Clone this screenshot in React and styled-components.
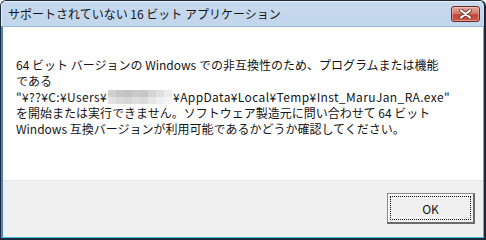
import React from "react";
import styled, { createGlobalStyle } from "styled-components";

const GlobalStyle = createGlobalStyle`
  html, body {
    margin: 0;
    padding: 0;
    background: #ffffff;
  }
  body {
    width: 486px;
    height: 240px;
    overflow: hidden;
    font-family: "Noto Sans CJK JP", "Noto Sans", sans-serif;
  }
`;

const Window = styled.div`
  width: 486px;
  height: 240px;
  box-sizing: border-box;
  display: flex;
  flex-direction: column;
  border-style: solid;
  border-color: #1d2838;
  border-width: 1px 2px 2px 1px;
  border-radius: 6px 6px 0 0;
  background: linear-gradient(#c6d9ee, #b6cde7 40%, #b3cae5);
  overflow: hidden;
`;

const TitleBar = styled.div`
  height: 25px;
  flex: none;
  display: flex;
  align-items: center;
  justify-content: space-between;
  padding: 0 4px 0 7px;
  box-shadow: inset 1px 1px 0 rgba(255, 255, 255, 0.6);
`;

const Title = styled.span`
  font-size: 12px;
  color: #151515;
  white-space: nowrap;
`;

const CloseButton = styled.div`
  width: 29px;
  height: 16px;
  margin-top: 1px;
  box-sizing: border-box;
  border: 1px solid #6b2820;
  border-radius: 3px;
  background: linear-gradient(#e5a99c, #d27a68 45%, #c2463a 55%, #cc5a48);
  box-shadow: inset 0 0 0 1px rgba(255, 220, 210, 0.45);
  display: flex;
  align-items: center;
  justify-content: center;
`;

const Client = styled.div`
  flex: 1;
  display: flex;
  flex-direction: column;
  border-left: 2px solid #4b86c6;
  border-right: 1px solid #42bfe8;
  border-bottom: 1px solid #42bfe8;
  border-top: 1px solid #9fb8d6;
`;

const Body = styled.div`
  flex: 1;
  background: #ffffff;
  padding: 30px 0 0 13px;
`;

const Message = styled.div`
  font-size: 12px;
  line-height: 16px;
  color: #151515;
`;

const Line = styled.div`
  white-space: nowrap;
  display: flex;
  align-items: center;
  height: 16px;
  letter-spacing: ${(p) => (p.$wide ? "0.38px" : "0")};
`;

const Blur = styled.span`
  display: inline-grid;
  grid-template-columns: repeat(8, 8px);
  grid-template-rows: repeat(2, 7px);
  margin: 0 1px;
`;

const Cell = styled.span`
  background: ${(p) => p.$shade};
`;

const Footer = styled.div`
  height: 57px;
  flex: none;
  background: #f0f0f0;
  border-top: 1px solid #e6e6e6;
  display: flex;
  justify-content: flex-end;
  align-items: flex-start;
  padding: 12px 8px 0 0;
  box-sizing: border-box;
`;

const Button = styled.div`
  width: 88px;
  height: 31px;
  box-sizing: border-box;
  border-style: solid;
  border-color: #8a8a8a #6a6a6a #6a6a6a #8a8a8a;
  border-width: 1px 2px 2px 1px;
  background: #f0f0f0;
  box-shadow: inset 1px 1px 0 #ffffff;
  display: flex;
  padding: 2px;
`;

const FocusRing = styled.span`
  flex: 1;
  border: 1px dotted #111111;
  display: flex;
  align-items: center;
  justify-content: center;
  font-size: 12px;
  color: #151515;
`;

const shades = [
  "#d0d0d0", "#c6c6c6", "#c2c2c2", "#cacaca", "#c6c6c6", "#d4d4d4", "#e0e0e0", "#ececec",
  "#e2e2e2", "#dadada", "#d6d6d6", "#dedede", "#dadada", "#e6e6e6", "#eeeeee", "#f4f4f4",
];

function CloseIcon() {
  return (
    <svg width="13" height="10" viewBox="0 0 13 10">
      <path d="M2 1.5 L11 8.5 M11 1.5 L2 8.5" stroke="#7a3a32" strokeWidth="4" strokeLinecap="round" />
      <path d="M2 1.5 L11 8.5 M11 1.5 L2 8.5" stroke="#ffffff" strokeWidth="2.2" strokeLinecap="round" />
    </svg>
  );
}

export default function App() {
  return (
    <>
      <GlobalStyle />
      <Window>
        <TitleBar>
          <Title>サポートされていない 16 ビット アプリケーション</Title>
          <CloseButton>
            <CloseIcon />
          </CloseButton>
        </TitleBar>
        <Client>
          <Body>
            <Message>
              <Line>64 ビット バージョンの Windows での非互換性のため、プログラムまたは機能</Line>
              <Line>である</Line>
              <Line $wide>
                "¥??¥C:¥Users¥
                <Blur>
                  {shades.map((s, i) => (
                    <Cell key={i} $shade={s} />
                  ))}
                </Blur>
                ¥AppData¥Local¥Temp¥Inst_MaruJan_RA.exe"
              </Line>
              <Line>を開始または実行できません。ソフトウェア製造元に問い合わせて 64 ビット</Line>
              <Line>Windows 互換バージョンが利用可能であるかどうか確認してください。</Line>
            </Message>
          </Body>
          <Footer>
            <Button>
              <FocusRing>OK</FocusRing>
            </Button>
          </Footer>
        </Client>
      </Window>
    </>
  );
}
